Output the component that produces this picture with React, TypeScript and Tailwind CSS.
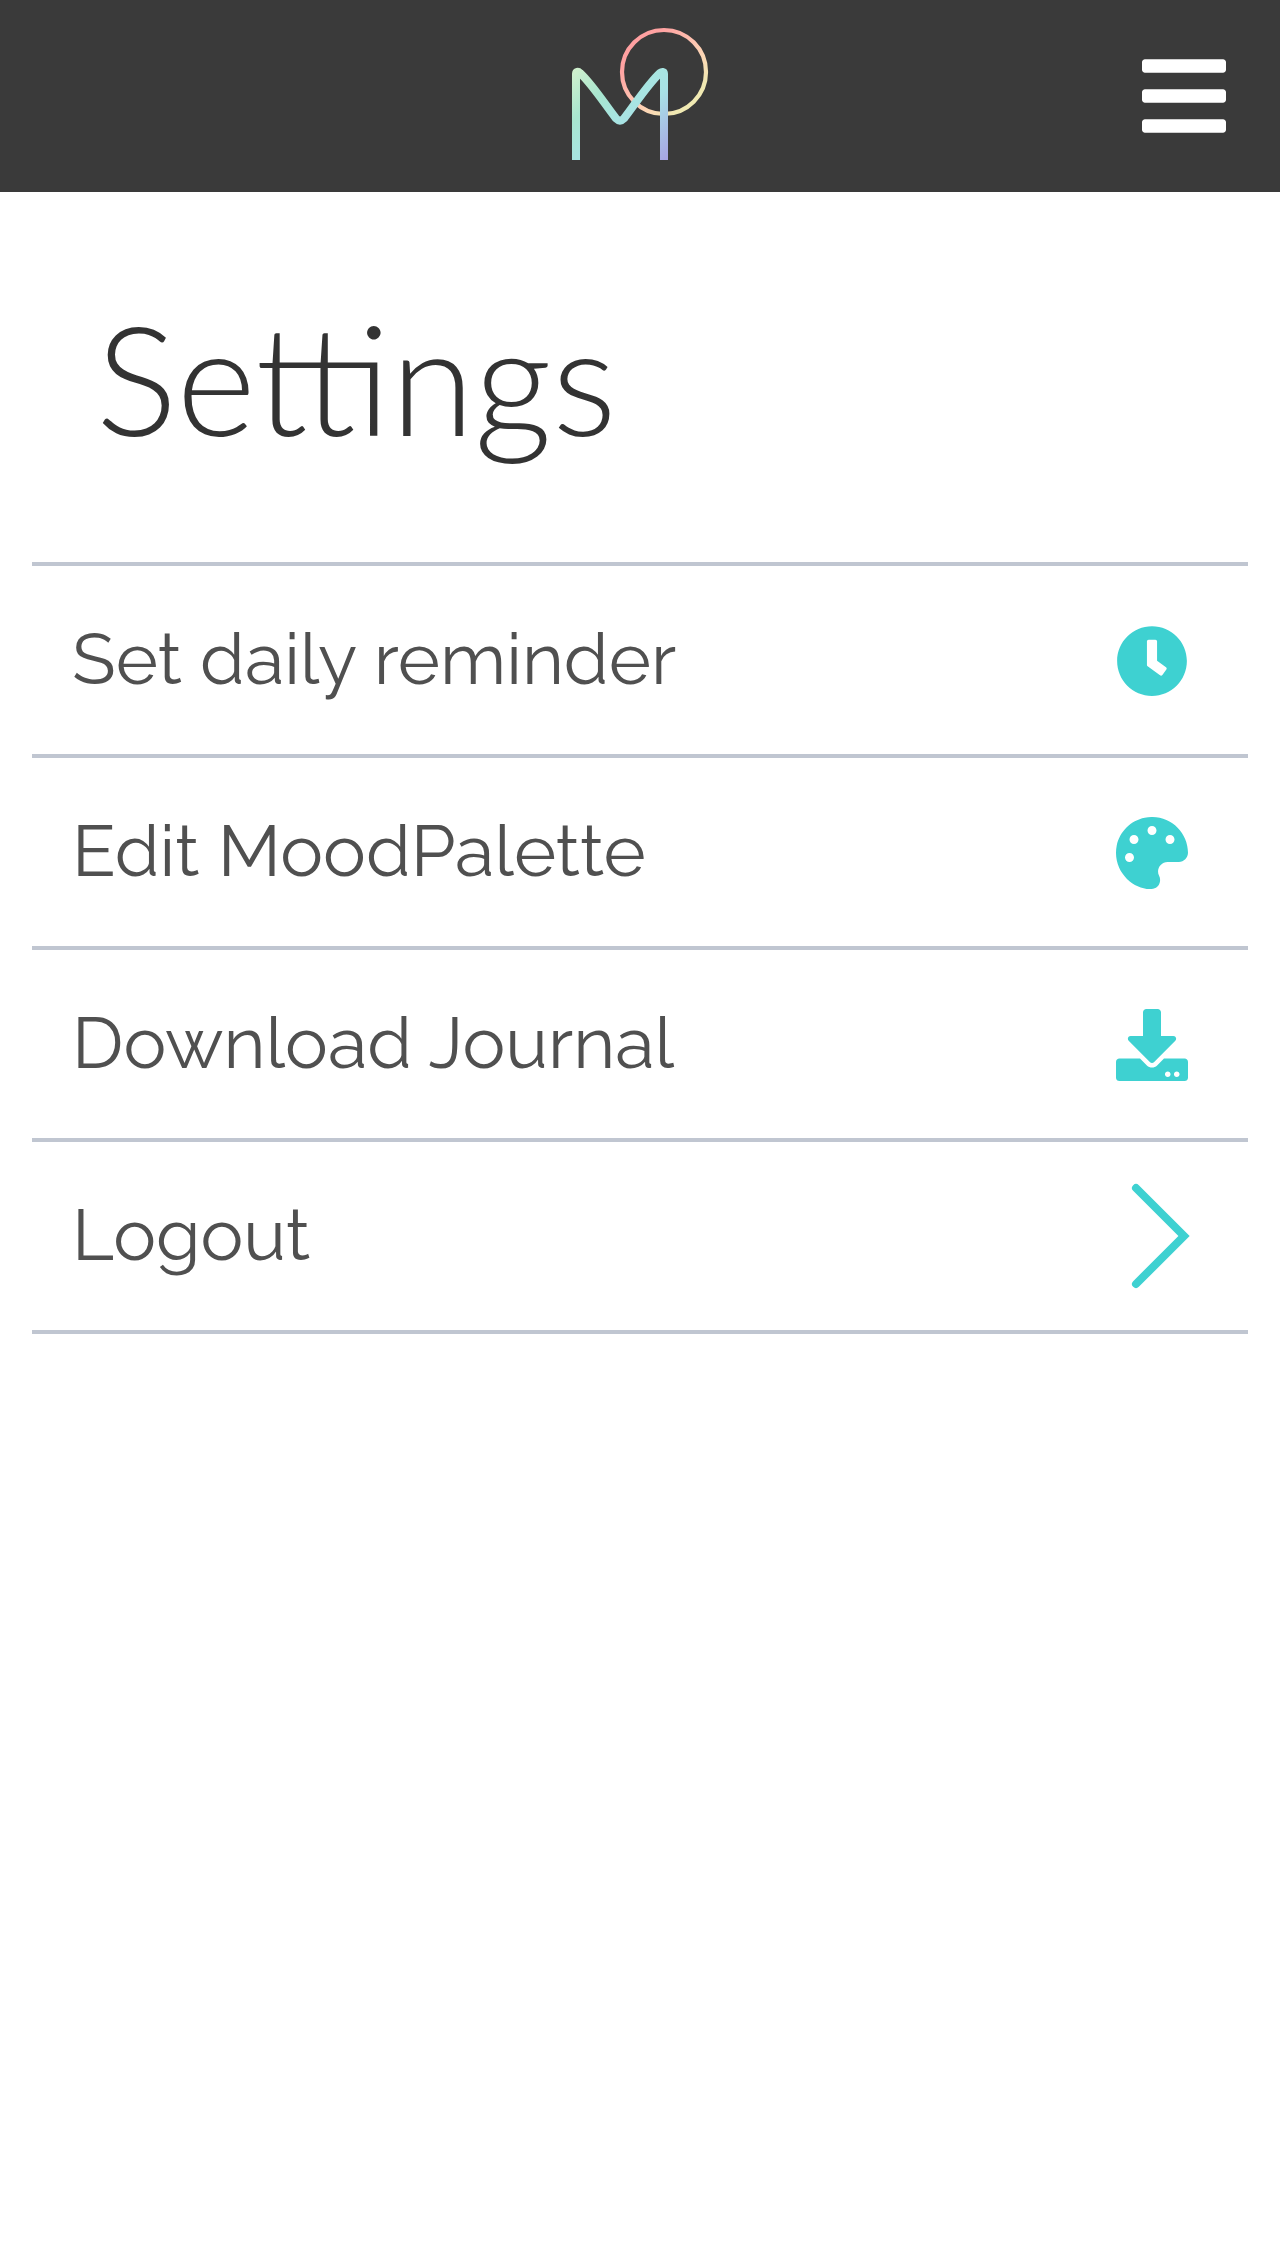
import type { ReactNode } from "react";
import { FaBars, FaPalette } from "react-icons/fa";

function Logo() {
  return (
    <svg className="h-[192px] w-[144px]" viewBox="568 0 144 192" fill="none">
      <defs>
        <linearGradient id="ring" gradientUnits="userSpaceOnUse" x1="620" y1="28" x2="708" y2="116">
          <stop offset="0" stopColor="#ff9a9e" />
          <stop offset="0.25" stopColor="#ffa3a2" />
          <stop offset="0.5" stopColor="#ffc6b2" />
          <stop offset="0.65" stopColor="#fbd9b5" />
          <stop offset="0.8" stopColor="#f0e8b2" />
          <stop offset="1" stopColor="#f0efb2" />
        </linearGradient>
        <linearGradient id="letter" gradientUnits="userSpaceOnUse" x1="572" y1="68" x2="668" y2="160">
          <stop offset="0" stopColor="#d3f1cd" />
          <stop offset="0.28" stopColor="#a8e6cf" />
          <stop offset="0.5" stopColor="#a8e5e2" />
          <stop offset="0.62" stopColor="#a8e1e5" />
          <stop offset="1" stopColor="#a8a2e4" />
        </linearGradient>
      </defs>
      <circle cx="664" cy="72" r="42" stroke="url(#ring)" strokeWidth="4.2" />
      <path
        d="M576 160V74C576 71.5 578 71 580 73C592 84 604 103 616 118.500Q620 122.500 624 118.500C636 103 648 84 660 73C662 71.500 664 71.500 664 74V160"
        stroke="url(#letter)"
        strokeWidth="8"
      />
    </svg>
  );
}

function ClockIcon() {
  return (
    <svg className="size-[72px]" viewBox="0 0 512 512" fill="currentColor">
      <path d="M256 8C119 8 8 119 8 256s111 248 248 248 248-111 248-248S393 8 256 8zm57.1 350.1L224.900 294c-3.100-2.300-4.900-5.900-4.900-9.700V116c0-6.600 5.400-12 12-12h48c6.600 0 12 5.400 12 12v137.700l63.500 46.200c5.400 3.900 6.500 11.400 2.600 16.800l-28.200 38.800c-3.900 5.300-11.400 6.500-16.800 2.600z" />
    </svg>
  );
}

function DownloadIcon() {
  return (
    <svg className="size-[72px]" viewBox="0 0 512 512" fill="currentColor">
      <path d="M216 0h80c13.300 0 24 10.700 24 24v168h87.700c17.800 0 26.700 21.500 14.100 34.100L269.700 378.300c-7.500 7.500-19.800 7.500-27.300 0L90.100 226.100c-12.600-12.600-3.700-34.100 14.100-34.100H192V24c0-13.300 10.700-24 24-24zm296 376v112c0 13.300-10.700 24-24 24H24c-13.300 0-24-10.700-24-24V376c0-13.300 10.700-24 24-24h146.700l49 49c20.100 20.100 52.500 20.100 72.600 0l49-49H488c13.300 0 24 10.700 24 24zm-124 88c0-11-9-20-20-20s-20 9-20 20 9 20 20 20 20-9 20-20zm64 0c0-11-9-20-20-20s-20 9-20 20 9 20 20 20 20-9 20-20z" />
    </svg>
  );
}

function ChevronIcon() {
  return (
    <svg className="mb-0.5 h-[104px] w-[60px] overflow-visible" viewBox="0 0 60 104" fill="none">
      <path d="M8 4L56 52L8 100" stroke="currentColor" strokeWidth="8" strokeLinecap="round" />
    </svg>
  );
}

function Row({ label, icon }: { label: string; icon: ReactNode }) {
  return (
    <li className="flex h-48 items-center justify-between border-b-4 border-[#c0c6d1] pr-[60px] pl-10">
      <span className="mb-0.5 text-[72px] leading-[96px] whitespace-nowrap text-[#505050]">{label}</span>
      <span className="mt-0.5 text-[#3ed1d1]">{icon}</span>
    </li>
  );
}

export default function App() {
  return (
    <div className="min-h-[2256px] w-full bg-white font-['Raleway','Lato',sans-serif]">
      <header className="grid h-48 grid-cols-3 items-center bg-[#3a3a3a] pr-[54px] pl-[54px]">
        <span />
        <div className="flex justify-center">
          <Logo />
        </div>
        <button className="justify-self-end text-white" aria-label="Menu">
          <FaBars className="h-24 w-[84px]" />
        </button>
      </header>
      <h1 className="mt-[99px] ml-24 h-[271px] font-['Lato',sans-serif] text-[152px] leading-[172px] font-light text-[#333]">
        Settings
      </h1>
      <ul className="mx-8 border-t-4 border-[#c0c6d1]">
        <Row label="Set daily reminder" icon={<ClockIcon />} />
        <Row label="Edit MoodPalette" icon={<FaPalette className="size-[72px]" />} />
        <Row label="Download Journal" icon={<DownloadIcon />} />
        <Row label="Logout" icon={<ChevronIcon />} />
      </ul>
    </div>
  );
}
